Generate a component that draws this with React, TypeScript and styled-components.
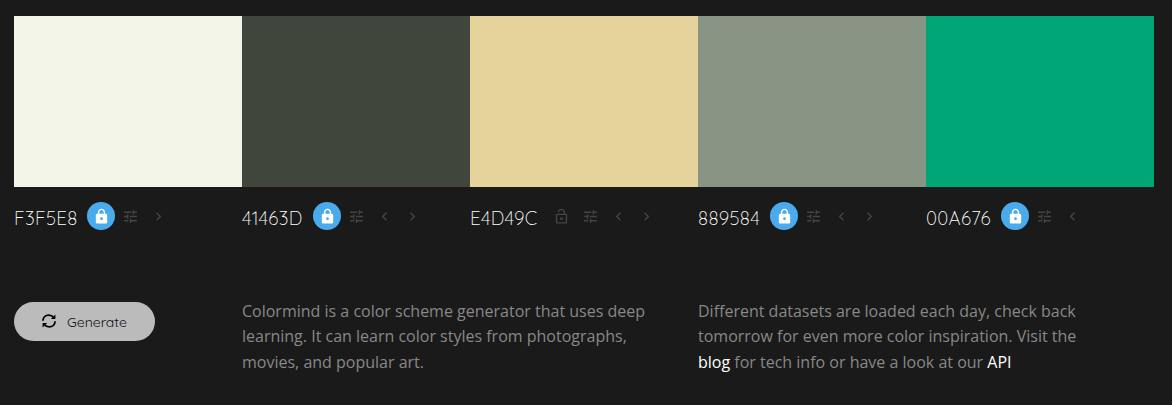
import React from 'react';
import styled, { createGlobalStyle } from 'styled-components';
import { MdLock, MdLockOpen, MdTune, MdChevronLeft, MdChevronRight } from 'react-icons/md';

const GlobalStyle = createGlobalStyle`
  body { margin: 0; background: #1a1a1a; font-family: "Open Sans", sans-serif; }
  * { box-sizing: border-box; }
`;

const Page = styled.main`
  width: 1172px;
  height: 405px;
  padding: 16px 18px 0 14px;
  overflow: hidden;
  background: #1a1a1a;
`;

const Palette = styled.section`
  display: grid;
  grid-template-columns: repeat(5, 228px);
`;

const Swatch = styled.div<{ $color: string }>`
  height: 171px;
  background: ${(p) => p.$color};
`;

const Controls = styled.div`
  display: flex;
  align-items: center;
  height: 28px;
  margin-top: 15px;
`;

const Hex = styled.span<{ $width: number }>`
  width: ${(p) => p.$width}px;
  flex: none;
  padding-top: 4px;
  font: 300 18.7px/28px Quicksand, Lato, sans-serif;
  letter-spacing: 0.35px;
  color: #fff;
  white-space: nowrap;
`;

const IconButton = styled.button`
  display: flex;
  align-items: center;
  justify-content: center;
  width: 28px;
  height: 28px;
  padding: 1px 0 0 1px;
  border: 0;
  background: none;
  color: #454545;
  font-size: 17px;
`;

const LockButton = styled(IconButton)<{ $locked: boolean }>`
  margin-right: 1px;
  border-radius: 50%;
  background: ${(p) => (p.$locked ? '#4aabec' : 'none')};
  color: ${(p) => (p.$locked ? '#fff' : '#454545')};
`;

const Footer = styled.section`
  display: grid;
  grid-template-columns: 228px 456px 456px;
  align-items: start;
  margin-top: 68px;
`;

const GenerateButton = styled.button`
  display: flex;
  align-items: center;
  gap: 11px;
  width: 141px;
  height: 39px;
  margin-top: 4px;
  padding: 0 0 0 28px;
  border: 0;
  border-radius: 20px;
  background: #bbb;
  color: #111;
  font: 400 14px/20px Quicksand, Lato, sans-serif;

  svg {
    margin-bottom: 2px;
  }
`;

const Copy = styled.p`
  width: 404px;
  margin: 0;
  padding-top: 0.6px;
  font-size: 16px;
  line-height: 25.6px;
  color: #888;
`;

const Link = styled.a`
  color: #fff;
`;

const colors = [
  { hex: 'F3F5E8', width: 73, locked: true, left: false, right: true },
  { hex: '41463D', width: 71, locked: true, left: true, right: true },
  { hex: 'E4D49C', width: 77, locked: false, left: true, right: true },
  { hex: '889584', width: 72, locked: true, left: true, right: true },
  { hex: '00A676', width: 75, locked: true, left: true, right: false },
];

function RefreshIcon() {
  return (
    <svg width="14" height="14" viewBox="0 0 14 14" fill="none" stroke="#000" strokeWidth="1.8">
      <path d="M.9 6.7C1 3.2 3.6 1.1 6.7 1.1c2.2 0 3.8.8 5.1 2.4M13.1 7.3c-.1 3.5-2.7 5.6-5.8 5.6-2.2 0-3.8-.8-5.1-2.4" />
      <path d="M13.4.4v4.5H8.9zM.6 13.6V9.1h4.5z" fill="#000" stroke="none" />
    </svg>
  );
}

export default function App() {
  return (
    <Page>
      <GlobalStyle />
      <Palette>
        {colors.map((c) => (
          <div key={c.hex}>
            <Swatch $color={`#${c.hex}`} />
            <Controls>
              <Hex $width={c.width}>{c.hex}</Hex>
              <LockButton $locked={c.locked} aria-label="Lock">{c.locked ? <MdLock /> : <MdLockOpen />}</LockButton>
              <IconButton aria-label="Adjust"><MdTune /></IconButton>
              {c.left && <IconButton aria-label="Move left"><MdChevronLeft /></IconButton>}
              {c.right && <IconButton aria-label="Move right"><MdChevronRight /></IconButton>}
            </Controls>
          </div>
        ))}
      </Palette>
      <Footer>
        <GenerateButton><RefreshIcon />Generate</GenerateButton>
        <Copy>
          Colormind is a color scheme generator that uses deep learning. It can learn color styles from photographs, movies, and popular art.
        </Copy>
        <Copy>
          Different datasets are loaded each day, check back tomorrow for even more color inspiration. Visit the{' '}
          <Link>blog</Link> for tech info or have a look at our <Link>API</Link>
        </Copy>
      </Footer>
    </Page>
  );
}
